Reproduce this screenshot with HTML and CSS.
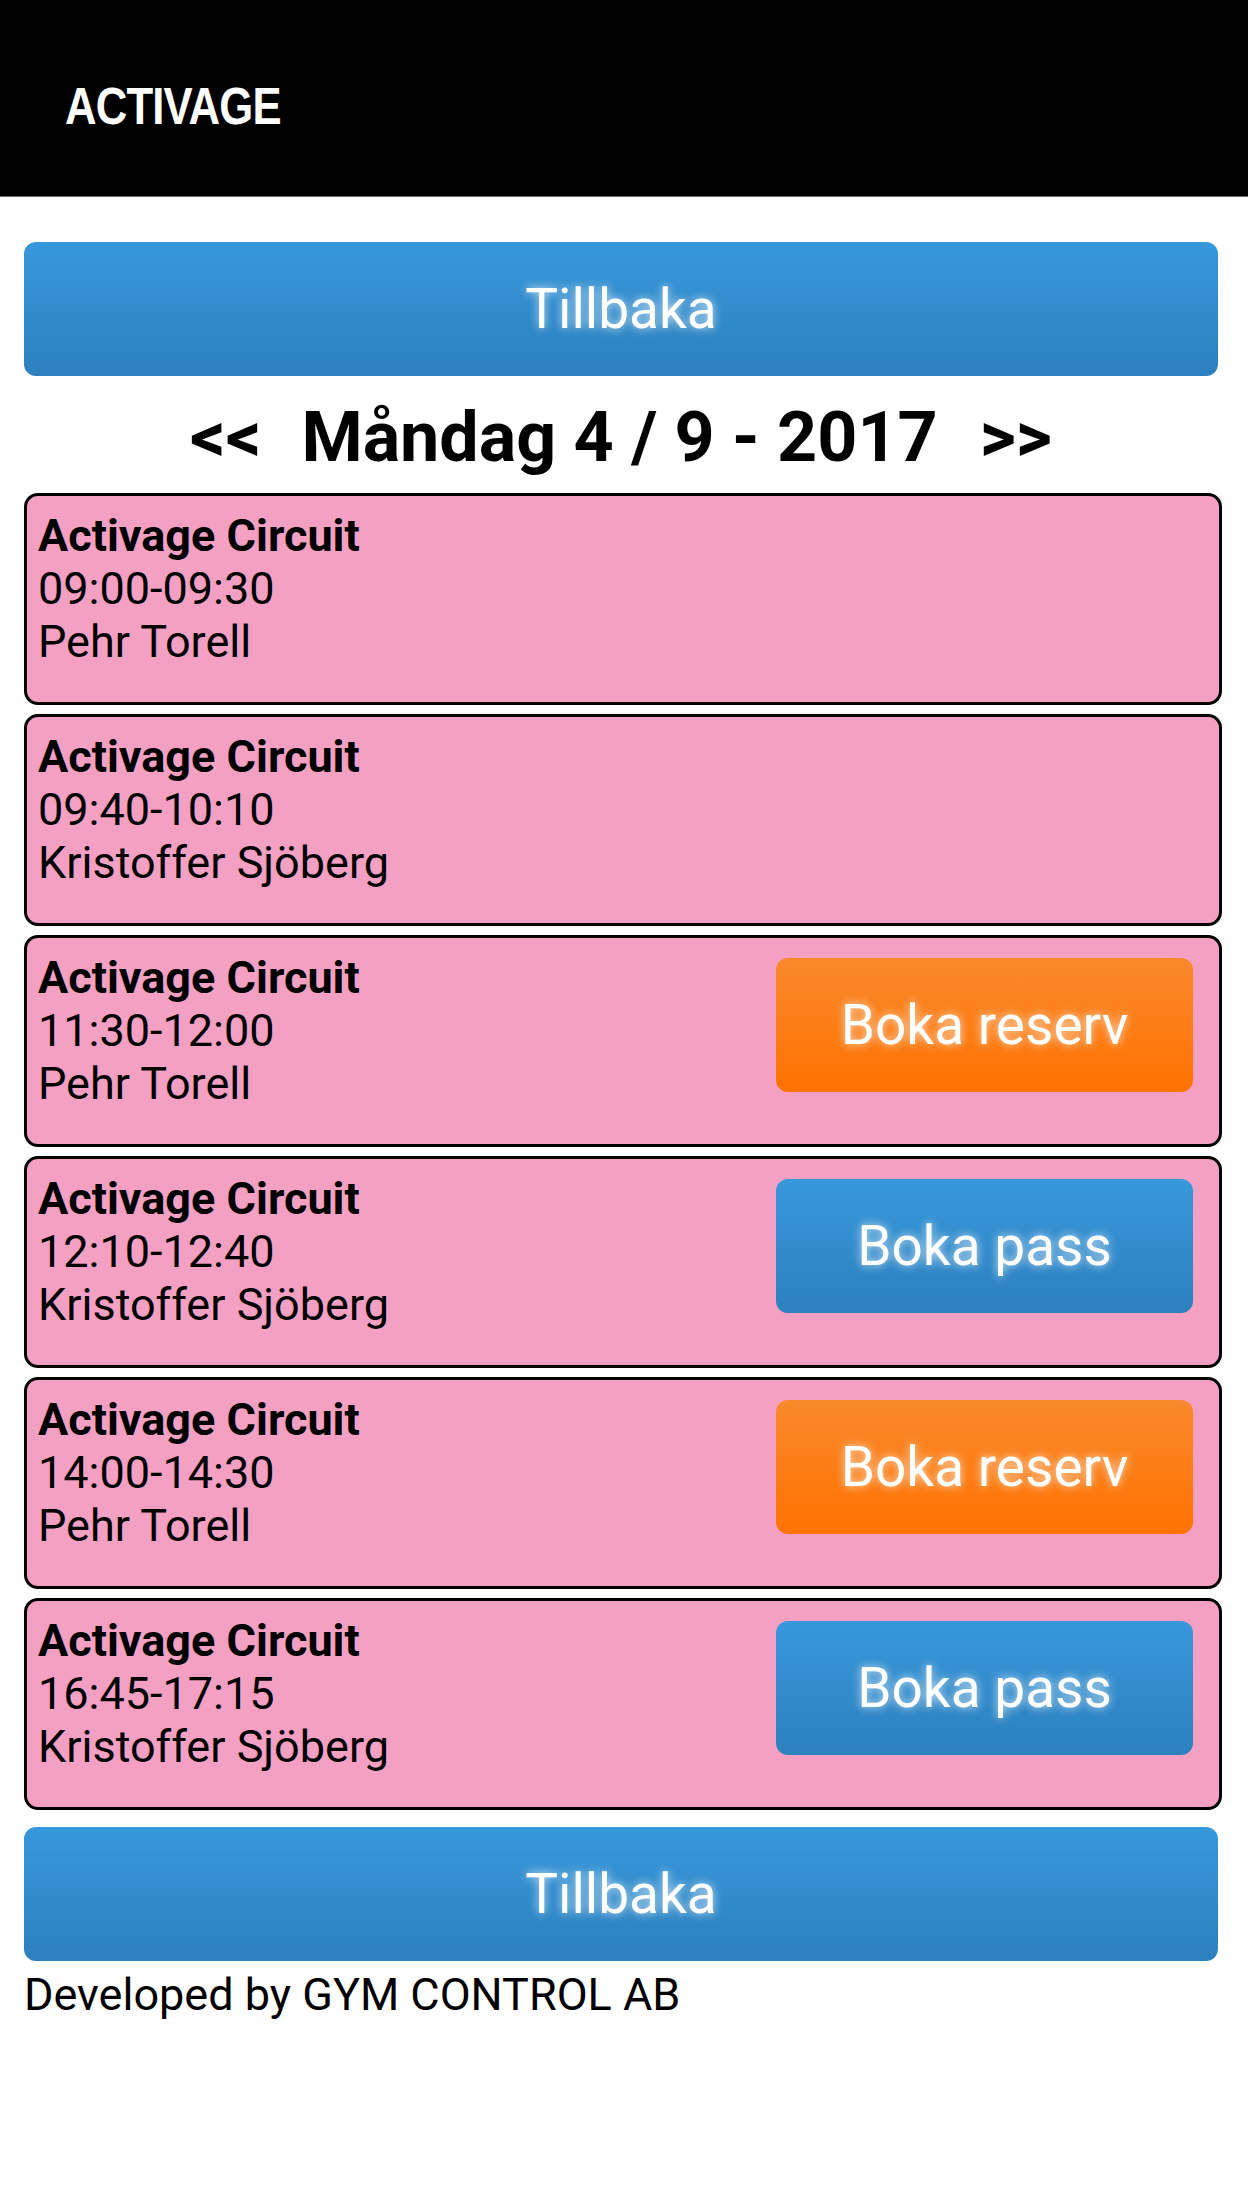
FILE: index.html
```html
<!DOCTYPE html>
<html lang="sv">
<head>
    <meta charset="UTF-8">
    <meta name="viewport" content="width=device-width, initial-scale=1.0">
    <title>Activage - Boka pass</title>
    <link rel="stylesheet" href="styles.css">
</head>
<body>

<div class="header">
    <span class="logo">ACTIVAGE</span>
</div>

<div class="page">
    <a href="#" class="btn btn-blue btn-wide">Tillbaka</a>

    <div class="day-nav">
        <a href="#" class="prev">&lt;&lt;</a>Måndag 4 / 9 - 2017<a href="#" class="next">&gt;&gt;</a>
    </div>

    <div class="session">
        <div class="session-info">
            <b>Activage Circuit</b><br>
            09:00-09:30<br>
            Pehr Torell
        </div>
    </div>

    <div class="session">
        <div class="session-info">
            <b>Activage Circuit</b><br>
            09:40-10:10<br>
            Kristoffer Sjöberg
        </div>
    </div>

    <div class="session">
        <div class="session-info">
            <b>Activage Circuit</b><br>
            11:30-12:00<br>
            Pehr Torell
        </div>
        <a href="#" class="btn btn-orange btn-book">Boka reserv</a>
    </div>

    <div class="session">
        <div class="session-info">
            <b>Activage Circuit</b><br>
            12:10-12:40<br>
            Kristoffer Sjöberg
        </div>
        <a href="#" class="btn btn-blue btn-book">Boka pass</a>
    </div>

    <div class="session">
        <div class="session-info">
            <b>Activage Circuit</b><br>
            14:00-14:30<br>
            Pehr Torell
        </div>
        <a href="#" class="btn btn-orange btn-book">Boka reserv</a>
    </div>

    <div class="session">
        <div class="session-info">
            <b>Activage Circuit</b><br>
            16:45-17:15<br>
            Kristoffer Sjöberg
        </div>
        <a href="#" class="btn btn-blue btn-book">Boka pass</a>
    </div>

    <a href="#" class="btn btn-blue btn-wide btn-bottom">Tillbaka</a>

    <div class="footer">Developed by GYM CONTROL AB</div>
</div>

</body>
</html>
```

FILE: styles.css
```css
body {
    margin: 0;
    padding: 0;
    font-family: Roboto, "Liberation Sans", Arial, sans-serif;
    color: #000;
    background: #fff;
}

.header {
    background: #000;
    height: 196px;
    border-bottom: 1px solid #6b6b6b;
    display: flex;
    align-items: center;
    padding-left: 65px;
}

.logo {
    font-family: "Liberation Sans", Arial, sans-serif;
    font-weight: bold;
    font-size: 52px;
    letter-spacing: -1px;
    color: #fff;
    display: inline-block;
    transform: scaleX(0.84);
    transform-origin: left center;
    margin-top: 15px;
}

.page {
    padding: 45px 30px 0 24px;
}

.btn {
    display: flex;
    align-items: center;
    justify-content: center;
    box-sizing: border-box;
    height: 134px;
    border-radius: 12px;
    color: #fff;
    text-decoration: none;
    font-size: 55px;
    text-shadow: 0 0 10px rgba(255, 255, 255, 0.8);
}

.btn-blue {
    background: linear-gradient(to bottom, #3898dc, #2c80bd);
}

.btn-orange {
    background: linear-gradient(to bottom, #f9892c, #ff7200);
}

.btn-bottom {
    margin-top: 17px;
}

.day-nav {
    text-align: center;
    font-size: 70px;
    font-weight: bold;
    margin: 20px 0 15px;
    height: 82px;
}

.day-nav a {
    color: #000;
    text-decoration: none;
}

.day-nav .prev {
    margin-right: 40px;
}

.day-nav .next {
    margin-left: 42px;
}

.session {
    display: flex;
    justify-content: space-between;
    align-items: flex-start;
    box-sizing: border-box;
    width: calc(100% + 4px);
    height: 212px;
    margin-bottom: 9px;
    padding: 13px 26px 0 11px;
    background: #f3a0c2;
    border: 3px solid #000;
    border-radius: 14px;
    font-size: 45px;
}

.btn-book {
    width: 417px;
    margin-top: 7px;
}

.footer {
    font-size: 45px;
    margin-top: 7px;
    padding-bottom: 170px;
}
```
